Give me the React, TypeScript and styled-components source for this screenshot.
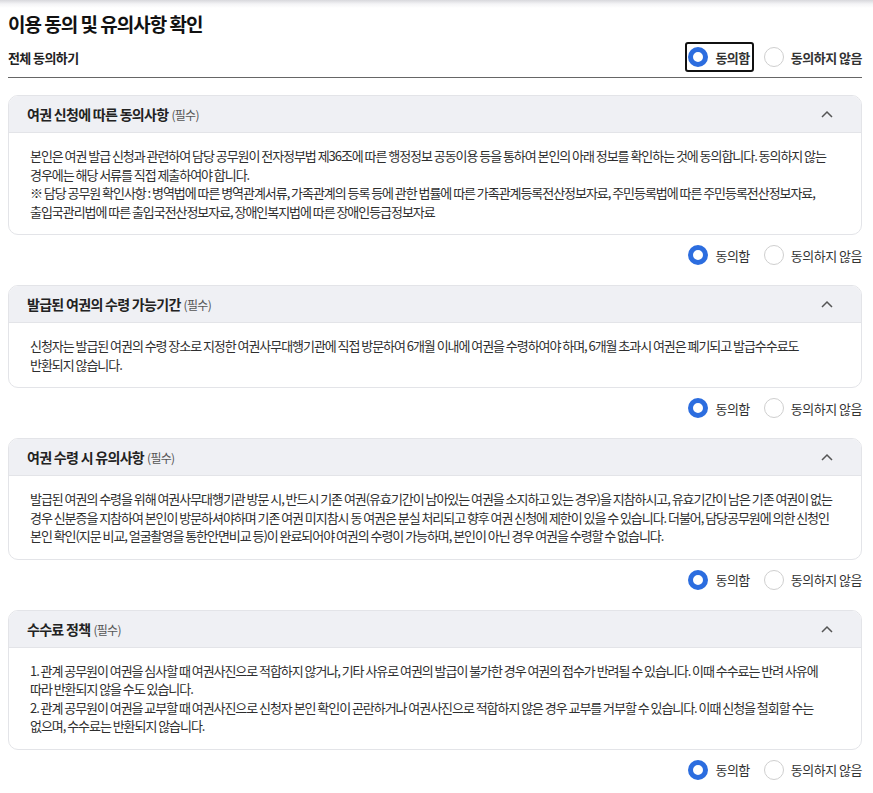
import React, { useState } from "react";
import styled, { createGlobalStyle } from "styled-components";

const GlobalStyle = createGlobalStyle`
  html, body { margin: 0; padding: 0; background: #fff; }
  body { font-family: "Noto Sans CJK KR", "Noto Sans", sans-serif; color: #222; }
  * { box-sizing: border-box; }
`;

const Page = styled.div`
  padding: 10px 11px 20px 8px;
  background: linear-gradient(to bottom, #d8d8dc 0px, #f4f4f6 4px, #ffffff 8px);
`;

const Title = styled.h1`
  margin: 0;
  font-size: 19px;
  line-height: 28px;
  font-weight: 700;
  letter-spacing: -1px;
  color: #111;
`;

const AllRow = styled.div`
  display: flex;
  align-items: center;
  justify-content: space-between;
  margin: 4px 0 17px;
  padding-bottom: 5px;
  border-bottom: 1px solid #666;
`;

const AllLabel = styled.div`
  font-size: 13px;
  font-weight: 700;
  letter-spacing: -0.6px;
  color: #222;
`;

const RadioGroup = styled.div<{ $top?: boolean }>`
  display: flex;
  align-items: center;
  justify-content: flex-end;
  gap: ${(p) => (p.$top ? "10px" : "14px")};
  height: 30px;
  margin: ${(p) => (p.$top ? "0" : "5px 0 15px")};
`;

const Option = styled.label<{ $focus?: boolean }>`
  display: flex;
  align-items: center;
  gap: 7px;
  height: 30px;
  padding: ${(p) => (p.$focus ? "0 2px 0 1px" : "0")};
  border: ${(p) => (p.$focus ? "2px solid #111" : "none")};
  border-radius: 3px;
  cursor: pointer;
`;

const Circle = styled.span<{ $on: boolean }>`
  width: 20px;
  height: 20px;
  border-radius: 50%;
  background: #fff;
  border: ${(p) => (p.$on ? "5px solid #2c6ddf" : "1px solid #cfcfcf")};
  flex: none;
`;

const OptionText = styled.span<{ $bold?: boolean }>`
  font-size: 13px;
  font-weight: ${(p) => (p.$bold ? 700 : 400)};
  letter-spacing: -0.5px;
  color: #333;
  white-space: nowrap;
`;

const Card = styled.section`
  border: 1px solid #e3e4e8;
  border-radius: 10px;
  overflow: hidden;
`;

const CardHeader = styled.div`
  display: flex;
  align-items: center;
  justify-content: space-between;
  height: 37px;
  padding: 0 28px 0 18px;
  background: #eff0f4;
  border-bottom: 1px solid #e3e4e8;
`;

const CardTitle = styled.h2`
  margin: 0;
  font-size: 14px;
  font-weight: 700;
  letter-spacing: -0.7px;
  color: #222;
`;

const Required = styled.span`
  font-size: 12px;
  font-weight: 400;
  color: #555;
  margin-left: 3px;
`;

const CardBody = styled.div`
  padding: 14px 8px 13px 21px;
  font-size: 13px;
  line-height: 18.5px;
  letter-spacing: -1.05px;
  color: #2e2e2e;
`;

const Line = styled.div`
  white-space: nowrap;
`;

const Chevron = () => (
  <svg width="12" height="8" viewBox="0 0 12 8" fill="none">
    <polyline points="1,7 6,2 11,7" stroke="#555" strokeWidth="1.5" fill="none" />
  </svg>
);

type Choice = "yes" | "no";

const RadioPair = ({ top, value, onChange }: { top?: boolean; value: Choice; onChange: (v: Choice) => void }) => (
  <RadioGroup $top={top}>
    <Option $focus={top} onClick={() => onChange("yes")}>
      <Circle $on={value === "yes"} />
      <OptionText $bold={top}>동의함</OptionText>
    </Option>
    <Option onClick={() => onChange("no")}>
      <Circle $on={value === "no"} />
      <OptionText $bold={top}>동의하지 않음</OptionText>
    </Option>
  </RadioGroup>
);

const sections: { title: string; lines: string[] }[] = [
  {
    title: "여권 신청에 따른 동의사항",
    lines: [
      "본인은 여권 발급 신청과 관련하여 담당 공무원이 전자정부법 제36조에 따른 행정정보 공동이용 등을 통하여 본인의 아래 정보를 확인하는 것에 동의합니다. 동의하지 않는",
      "경우에는 해당 서류를 직접 제출하여야 합니다.",
      "※ 담당 공무원 확인사항 : 병역법에 따른 병역관계서류, 가족관계의 등록 등에 관한 법률에 따른 가족관계등록전산정보자료, 주민등록법에 따른 주민등록전산정보자료,",
      "출입국관리법에 따른 출입국전산정보자료, 장애인복지법에 따른 장애인등급정보자료",
    ],
  },
  {
    title: "발급된 여권의 수령 가능기간",
    lines: [
      "신청자는 발급된 여권의 수령 장소로 지정한 여권사무대행기관에 직접 방문하여 6개월 이내에 여권을 수령하여야 하며, 6개월 초과시 여권은 폐기되고 발급수수료도",
      "반환되지 않습니다.",
    ],
  },
  {
    title: "여권 수령 시 유의사항",
    lines: [
      "발급된 여권의 수령을 위해 여권사무대행기관 방문 시, 반드시 기존 여권(유효기간이 남아있는 여권을 소지하고 있는 경우)을 지참하시고, 유효기간이 남은 기존 여권이 없는",
      "경우 신분증을 지참하여 본인이 방문하셔야하며 기존 여권 미지참시 동 여권은 분실 처리되고 향후 여권 신청에 제한이 있을 수 있습니다. 더불어, 담당공무원에 의한 신청인",
      "본인 확인(지문 비교, 얼굴촬영을 통한안면비교 등)이 완료되어야 여권의 수령이 가능하며, 본인이 아닌 경우 여권을 수령할 수 없습니다.",
    ],
  },
  {
    title: "수수료 정책",
    lines: [
      "1. 관계 공무원이 여권을 심사할 때 여권사진으로 적합하지 않거나, 기타 사유로 여권의 발급이 불가한 경우 여권의 접수가 반려될 수 있습니다. 이때 수수료는 반려 사유에",
      "따라 반환되지 않을 수도 있습니다.",
      "2. 관계 공무원이 여권을 교부할 때 여권사진으로 신청자 본인 확인이 곤란하거나 여권사진으로 적합하지 않은 경우 교부를 거부할 수 있습니다. 이때 신청을 철회할 수는",
      "없으며, 수수료는 반환되지 않습니다.",
    ],
  },
];

export default function App() {
  const [all, setAll] = useState<Choice>("yes");
  const [vals, setVals] = useState<Choice[]>(["yes", "yes", "yes", "yes"]);
  return (
    <>
      <GlobalStyle />
      <Page>
        <Title>이용 동의 및 유의사항 확인</Title>
        <AllRow>
          <AllLabel>전체 동의하기</AllLabel>
          <RadioPair
            top
            value={all}
            onChange={(v) => {
              setAll(v);
              setVals([v, v, v, v]);
            }}
          />
        </AllRow>
        {sections.map((s, i) => (
          <React.Fragment key={s.title}>
            <Card>
              <CardHeader>
                <CardTitle>
                  {s.title}
                  <Required>(필수)</Required>
                </CardTitle>
                <Chevron />
              </CardHeader>
              <CardBody>
                {s.lines.map((line, j) => (
                  <Line key={j}>{line}</Line>
                ))}
              </CardBody>
            </Card>
            <RadioPair
              value={vals[i]}
              onChange={(v) => setVals(vals.map((x, k) => (k === i ? v : x)))}
            />
          </React.Fragment>
        ))}
      </Page>
    </>
  );
}
